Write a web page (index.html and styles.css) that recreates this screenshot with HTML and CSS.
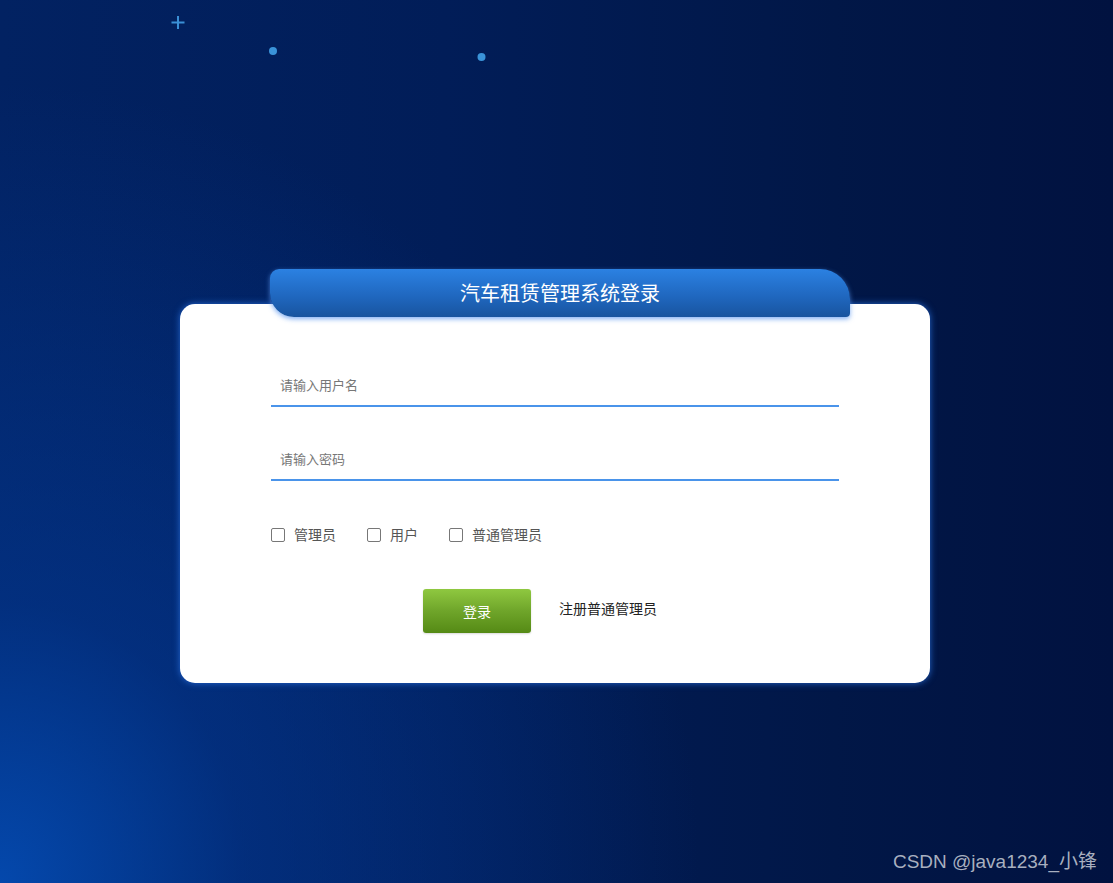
FILE: index.html
```html
<!DOCTYPE html>
<html lang="zh-CN">
<head>
<meta charset="utf-8">
<title>汽车租赁管理系统登录</title>
<link rel="stylesheet" href="styles.css">
</head>
<body>
<div class="page">
  <svg class="deco" width="1113" height="80" viewBox="0 0 1113 80">
    <path d="M178 16 V29 M171.5 22.5 H184.5" stroke="#3a8fd6" stroke-width="2" fill="none"/>
    <circle cx="273" cy="51" r="4" fill="#3a93d8"/>
    <circle cx="481.5" cy="57" r="4" fill="#3a93d8"/>
  </svg>
  <div class="login">
    <div class="tab">汽车租赁管理系统登录</div>
    <div class="card">
      <input class="field" type="text" placeholder="请输入用户名">
      <input class="field" type="password" placeholder="请输入密码">
      <div class="roles">
        <label class="role"><input type="checkbox" class="box"><span>管理员</span></label>
        <label class="role"><input type="checkbox" class="box"><span>用户</span></label>
        <label class="role"><input type="checkbox" class="box"><span>普通管理员</span></label>
      </div>
      <div class="actions">
        <button class="btn">登录</button>
        <a class="reg" href="#">注册普通管理员</a>
      </div>
    </div>
  </div>
  <div class="mark">CSDN @java1234_小锋</div>
</div>
</body>
</html>
```

FILE: styles.css
```css
html, body {
  margin: 0;
  padding: 0;
}
body {
  width: 1113px;
  height: 883px;
  overflow: hidden;
  font-family: "Microsoft YaHei", "Noto Sans CJK SC", "Liberation Sans", sans-serif;
}
.page {
  position: relative;
  width: 1113px;
  height: 883px;
  box-sizing: border-box;
  padding: 269px 0 0 180px;
  background:
    radial-gradient(ellipse 700px 800px at 0% 100%, rgba(4,74,176,0.95) 0%, rgba(3,58,150,0.55) 35%, rgba(2,40,110,0) 100%),
    linear-gradient(to right, #022262 0%, #011d58 40%, #011747 75%, #011240 100%);
}
.deco {
  position: absolute;
  left: 0;
  top: 0;
}
.login {
  width: 750px;
  display: flex;
  flex-direction: column;
}
.tab {
  position: relative;
  z-index: 1;
  margin: 0 0 -13px 90px;
  width: 580px;
  height: 48px;
  box-sizing: border-box;
  border-radius: 9px 30px 4px 24px;
  background: linear-gradient(to bottom, #2b81e2 0%, #2068c0 55%, #18549f 100%);
  box-shadow: 0 2px 5px rgba(90,150,240,0.75);
  color: #ffffff;
  font-size: 20px;
  line-height: 48px;
  text-align: center;
}
.card {
  background: #ffffff;
  border-radius: 15px;
  box-shadow: 0 0 7px rgba(40,110,220,0.9);
  height: 379px;
  box-sizing: border-box;
  padding: 63px 91px 0 91px;
  display: flex;
  flex-direction: column;
}
.field {
  display: block;
  width: 568px;
  height: 40px;
  box-sizing: border-box;
  margin: 0 0 34px 0;
  padding: 0 0 4px 9px;
  border: none;
  border-bottom: 2px solid #4a94ea;
  outline: none;
  font-family: inherit;
  font-size: 13px;
  color: #333;
  background: transparent;
}
.field::placeholder {
  color: #777;
}
.roles {
  display: flex;
  gap: 31px;
  margin-top: 11px;
  height: 18px;
  align-items: center;
}
.role {
  display: flex;
  align-items: center;
  gap: 9px;
  font-size: 14px;
  color: #555;
  line-height: 18px;
}
.role span {
  margin-top: -2px;
}
.box {
  appearance: none;
  -webkit-appearance: none;
  margin: 0;
  width: 14px;
  height: 14px;
  border: 1px solid #777;
  border-radius: 2px;
  background: #fff;
  box-sizing: border-box;
}
.actions {
  display: flex;
  align-items: center;
  gap: 28px;
  margin-top: 45px;
  padding-left: 152px;
}
.btn {
  width: 108px;
  height: 44px;
  border: none;
  border-radius: 3px;
  background: linear-gradient(to bottom, #8fc840 0%, #6fa52a 50%, #558a15 100%);
  color: #ffffff;
  font-family: inherit;
  font-size: 14px;
  padding: 0;
  box-shadow: 0 1px 2px rgba(0,0,0,0.15);
}
.reg {
  color: #222;
  font-size: 14px;
  text-decoration: none;
  margin-top: -6px;
}
.mark {
  position: absolute;
  right: 16px;
  bottom: 10px;
  font-family: "Liberation Sans", "Noto Sans CJK SC", sans-serif;
  font-size: 19px;
  color: rgba(200,205,215,0.85);
}
```
